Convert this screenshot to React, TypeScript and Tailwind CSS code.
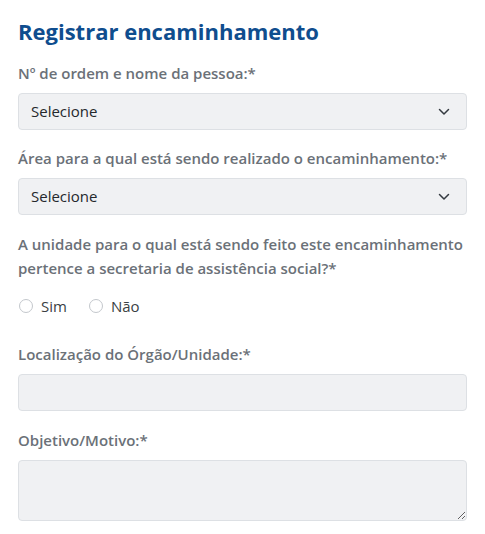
import React from 'react'

const FONT = { fontFamily: '"Open Sans", "Noto Sans", sans-serif' }

const Label = ({ children, className = '' }: { children: React.ReactNode; className?: string }) => (
  <label className={`block text-[15px] font-semibold leading-6 text-[#6b7178] ${className}`}>{children}</label>
)

const Chevron = () => (
  <svg width="12" height="8" viewBox="0 0 12 8" fill="none" className="shrink-0">
    <path d="M1.5 1.5 6 6l4.5-4.5" stroke="#343a40" strokeWidth="1.5" strokeLinecap="round" strokeLinejoin="round" />
  </svg>
)

const FakeSelect = () => (
  <div className="mt-[8px] flex h-[37px] items-center justify-between rounded-[4px] border border-[#dde0e4] bg-[#f0f1f3] pl-3 pr-[16px] text-[15px] text-[#24282c]">
    <span>Selecione</span>
    <Chevron />
  </div>
)

const Radio = ({ label }: { label: string }) => (
  <span className="flex items-center gap-[8px]">
    <span className="h-[14px] w-[14px] rounded-full border border-[#c3c7cc] bg-white" />
    <span className="text-[15px] text-[#3a3f44]">{label}</span>
  </span>
)

const App = () => {
  return (
    <div className="min-h-[534px] w-[485px] bg-white px-[18px] pt-[15px]" style={FONT}>
      <h1 className="text-[22px] font-bold leading-8 text-[#0f4d8e]">Registrar encaminhamento</h1>

      <Label className="mt-[14px]">Nº de ordem e nome da pessoa:*</Label>
      <FakeSelect />

      <Label className="mt-[16px]">Área para a qual está sendo realizado o encaminhamento:*</Label>
      <FakeSelect />

      <Label className="mt-[17px]">
        A unidade para o qual está sendo feito este encaminhamento pertence a secretaria de assistência social?*
      </Label>
      <div className="mt-[14px] flex h-6 items-center gap-[22px] pl-px">
        <Radio label="Sim" />
        <Radio label="Não" />
      </div>

      <Label className="mt-[24px]">Localização do Órgão/Unidade:*</Label>
      <div className="mt-[8px] h-[37px] rounded-[4px] border border-[#dde0e4] bg-[#f0f1f3]" />

      <Label className="mt-[17px]">Objetivo/Motivo:*</Label>
      <textarea
        className="mt-[8px] block h-[61px] w-full rounded-[4px] border border-[#dde0e4] bg-[#f0f1f3] outline-none"
        aria-label="Objetivo/Motivo"
      />
    </div>
  )
}

export default App
